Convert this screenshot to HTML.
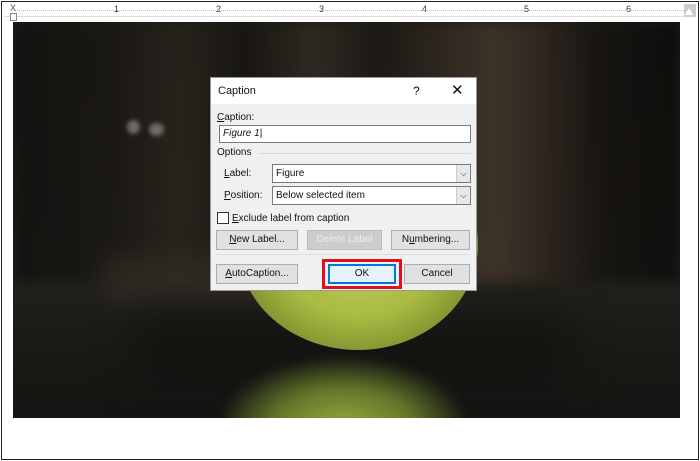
<!DOCTYPE html>
<html><head><style>
*{margin:0;padding:0;box-sizing:border-box}
body{width:700px;height:461px;background:#fff;position:relative;overflow:hidden;font-family:"Liberation Sans",sans-serif}
.a{position:absolute}
.frame{left:1px;top:1px;width:698px;height:459px;border:1px solid #222}
.ruler{left:4px;top:4px;width:692px;height:13px;background:#fff;border-bottom:1px solid #ddd}
.rn{position:absolute;top:0;font-size:9px;color:#333}
.img{left:13px;top:22px;width:667px;height:396px;overflow:hidden;background:#1b1a16}
.dlg{left:210px;top:77px;width:267px;height:214px;background:#f0f0f0;border:1px solid #999;font-size:10px;color:#111}
.btn{position:absolute;height:20px;background:#e1e1e1;border:1px solid #adadad;text-align:center;line-height:18px;font-size:10px}
.combo{position:absolute;left:61px;width:199px;height:19px;background:#fff;border:1px solid #7a7a7a;line-height:17px;padding-left:3px}
.combo .ar{position:absolute;right:0;top:0;width:14px;height:17px;background:#e8e8e8;border-left:1px solid #ccc;text-align:center;font-size:8px;line-height:17px}
u{text-decoration:underline}
</style></head><body>
<div class="a frame"></div>
<div class="a ruler">
<span class="rn" style="left:110px">1</span><span class="rn" style="left:212px">2</span><span class="rn" style="left:315px">3</span><span class="rn" style="left:418px">4</span><span class="rn" style="left:520px">5</span><span class="rn" style="left:622px">6</span>
<div style="position:absolute;left:10px;right:12px;top:6px;border-top:1px dotted #bbb"></div>
<div style="position:absolute;right:0;top:0;width:12px;height:13px;background:#ccc"></div>
<div style="position:absolute;right:3px;top:4px;width:0;height:0;border-left:4px solid transparent;border-right:4px solid transparent;border-bottom:7px solid #fff"></div>
<div style="position:absolute;left:6px;top:0;font-size:9px;color:#555;line-height:9px">X</div>
<div style="position:absolute;left:6px;top:9px;width:7px;height:8px;border:1px solid #888;background:#fff"></div>
</div>
<div class="a img">
 <div class="a" style="left:0;top:0;width:667px;height:396px;background:linear-gradient(180deg,#1c1a15 0%,#221f19 45%,#24221d 62%,#1a1a17 80%,#141412 100%)"></div>
 <div class="a" style="left:0;top:0;width:667px;height:260px;background:linear-gradient(90deg,#121110 0%,#1a1814 15%,#29251e 25%,#171511 35%,#322c24 45%,#1c1915 55%,#43372c 72%,#352b23 78%,#161411 88%,#0d0c0b 100%);opacity:.85;filter:blur(6px)"></div>
 <div class="a" style="left:90px;top:235px;width:220px;height:45px;background:#352e26;filter:blur(12px);opacity:.7"></div>
 <div class="a" style="left:114px;top:98px;width:13px;height:14px;border-radius:50%;background:#6e6a64;filter:blur(2px)"></div>
 <div class="a" style="left:136px;top:101px;width:15px;height:13px;border-radius:50%;background:#6e6a64;filter:blur(2px)"></div>
 <div class="a" style="left:120px;top:290px;width:440px;height:70px;background:#0e0e0c;filter:blur(20px);opacity:.5"></div>
 <div class="a" style="left:225px;top:118px;width:240px;height:210px;border-radius:50%;background:radial-gradient(ellipse at 50% 45%,#c8d46a 0%,#a9bb42 50%,#7d8c2e 78%,#3f441c 100%)"></div>
 <div class="a" style="left:205px;top:335px;width:250px;height:90px;background:radial-gradient(ellipse at 50% 80%,#95ad3c 0%,#63762a 40%,rgba(40,45,20,0) 72%);filter:blur(4px)"></div>
</div>
<div class="a dlg">
 <div class="a" style="left:0;top:0;width:265px;height:26px;background:#fff"></div>
 <div class="a" style="left:7px;top:7px;font-size:11px">Caption</div>
 <div class="a" style="left:202px;top:6px;font-size:12px">?</div>
 <div class="a" style="left:240px;top:3px;font-size:15px">✕</div>
 <div class="a" style="left:6px;top:34px"><u>C</u>aption:</div>
 <div class="a" style="left:8px;top:47px;width:252px;height:18px;background:#fff;border:1px solid #7a7a7a;font-style:italic;padding-left:3px;line-height:16px">Figure 1|</div>
 <div class="a" style="left:6px;top:69px">Options</div>
 <div class="a" style="left:48px;top:75px;width:212px;border-top:1px solid #d8d8d8"></div>
 <div class="a" style="left:13px;top:90px"><u>L</u>abel:</div>
 <div class="combo" style="top:86px">Figure<div class="ar">⌵</div></div>
 <div class="a" style="left:13px;top:112px"><u>P</u>osition:</div>
 <div class="combo" style="top:108px">Below selected item<div class="ar">⌵</div></div>
 <div class="a" style="left:6px;top:134px;width:12px;height:12px;background:#fff;border:1px solid #333"></div>
 <div class="a" style="left:21px;top:135px"><u>E</u>xclude label from caption</div>
 <div class="btn" style="left:5px;top:152px;width:82px"><u>N</u>ew Label...</div>
 <div class="btn" style="left:96px;top:152px;width:75px;background:#ccc;color:#eee;border-color:#bbb">Delete Label</div>
 <div class="btn" style="left:180px;top:152px;width:79px">N<u>u</u>mbering...</div>
 <div class="a" style="left:5px;top:176px;width:255px;border-top:1px solid #dcdcdc"></div>
 <div class="btn" style="left:5px;top:186px;width:82px"><u>A</u>utoCaption...</div>
 <div class="a" style="left:111px;top:181px;width:80px;height:30px;border:3px solid #e0101e"></div>
 <div class="btn" style="left:117px;top:186px;width:68px;background:#e5f1fb;border:2px solid #0078d7;line-height:16px">OK</div>
 <div class="btn" style="left:193px;top:186px;width:66px">Cancel</div>
</div>
</body></html>
